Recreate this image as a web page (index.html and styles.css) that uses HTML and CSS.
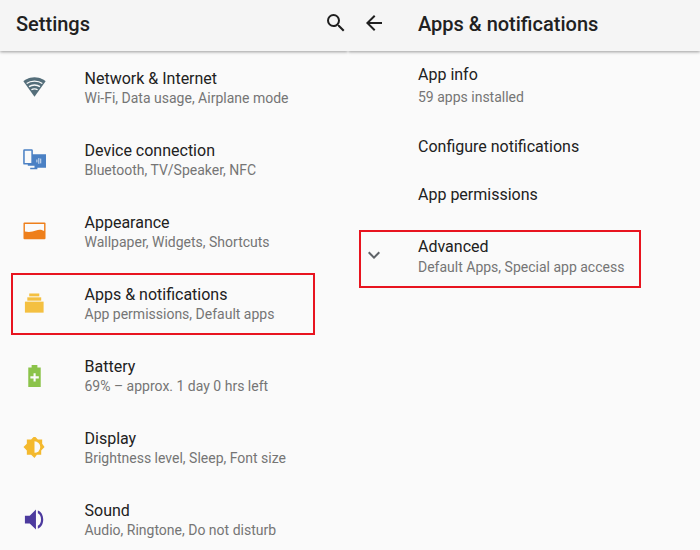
FILE: index.html
```html
<!DOCTYPE html>
<html lang="en">
<head>
<meta charset="utf-8">
<title>Settings</title>
<link rel="stylesheet" href="styles.css">
</head>
<body>
<div class="screen">
  <section class="pane pane-left">
    <header class="bar">
      <h1 class="bar-title">Settings</h1>
      <svg class="bar-icon search" viewBox="0 0 24 24"><path d="M15.5 14h-.79l-.28-.27A6.47 6.47 0 0 0 16 9.5 6.5 6.5 0 1 0 9.5 16c1.61 0 3.09-.59 4.23-1.57l.27.28v.79l5 4.99L20.49 19l-4.99-5zm-6 0C7.01 14 5 11.99 5 9.5S7.01 5 9.5 5 14 7.01 14 9.5 11.99 14 9.5 14z"/></svg>
    </header>
    <ul class="list">
      <li class="row">
        <svg class="row-icon" viewBox="0 0 24 24"><g transform="translate(0 -2)"><path fill="#546e7a" d="M12 22.500 .4 6.400C1.500 5.500 5.600 2.300 12 2.300s10.500 3.200 11.600 4.100z"/><path fill="none" stroke="#fafafa" stroke-width="1.400" d="M3.800 8.800C5.800 7.300 8.600 6.300 12 6.300s6.200 1 8.200 2.500M6.300 12c1.600-1.100 3.500-1.700 5.700-1.700s4.100.6 5.700 1.700M8.800 15.300c.9-.6 2-.9 3.200-.9s2.300.3 3.200.9"/></g></svg>
        <div class="text"><div class="title">Network &amp; Internet</div><div class="sub">Wi-Fi, Data usage, Airplane mode</div></div>
      </li>
      <li class="row">
        <svg class="row-icon" viewBox="0 0 24 24"><path fill="#4a80c4" d="M5 5.500h19v14h-9V21H7.500v-1.500H12v-2H5z"/><rect x="1" y="1" width="8.500" height="14.500" rx=".5" fill="#fafafa" stroke="#4a80c4" stroke-width="1.600"/><path fill="none" stroke="#dbe6f4" stroke-width="1" d="M14.500 11v3M16.500 9.500v6M18.500 10v5"/></svg>
        <div class="text"><div class="title">Device connection</div><div class="sub">Bluetooth, TV/Speaker, NFC</div></div>
      </li>
      <li class="row">
        <svg class="row-icon" viewBox="0 0 24 24"><rect x=".5" y="1.500" width="23" height="17.500" rx="1" fill="#ee7f1b"/><path fill="#fafafa" d="M2 3h20v7.500c-3-1.800-5.500-1.800-8.500-.6-3.500 1.400-7.500 2-11.500 1z"/></svg>
        <div class="text"><div class="title">Appearance</div><div class="sub">Wallpaper, Widgets, Shortcuts</div></div>
      </li>
      <li class="row is-marked">
        <svg class="row-icon" viewBox="0 0 24 24"><path fill="#f4c041" d="M2 9h19.500v11.500H2z"/><path fill="#f4c041" d="M4.500 4.500h14.500v3.500H4.500z"/><path fill="#f4c041" d="M6.500 .5h10.500v3H6.500z"/></svg>
        <div class="text"><div class="title">Apps &amp; notifications</div><div class="sub">App permissions, Default apps</div></div>
      </li>
      <li class="row">
        <svg class="row-icon" viewBox="0 0 24 24"><path fill="#8bc34a" d="M9 0h6v2.500h3.500V23h-13V2.500H9z"/><path fill="#fafafa" d="M11 8.500h2.200v3.300h3.300V14h-3.300v3.300H11V14H7.700v-2.200H11z"/></svg>
        <div class="text"><div class="title">Battery</div><div class="sub">69% – approx. 1 day 0 hrs left</div></div>
      </li>
      <li class="row">
        <svg class="row-icon" viewBox="0 0 24 24"><g transform="translate(0 -1.500)"><path fill="#f4b92e" d="M22.500 12 19 15.500V20h-4.500L12 23.500 8.500 20H4v-4.500L.5 12 4 8.500V4h4.500L12 .5 15.500 4H20v4.500z"/><path fill="#fafafa" d="M12 6a6 6 0 0 1 0 12z"/></g></svg>
        <div class="text"><div class="title">Display</div><div class="sub">Brightness level, Sleep, Font size</div></div>
      </li>
      <li class="row">
        <svg class="row-icon" viewBox="0 0 24 24"><g transform="translate(0 -1)"><path fill="#4c3a9e" d="M2 8v8h5l6.500 6.500V1.500L7 8z"/><path fill="#4c3a9e" d="M15.500 2.500v3c2.300.9 3.300 3.600 3.300 6.500s-1 5.600-3.300 6.500v3c3.600-1.200 5.600-5 5.600-9.500s-2-8.300-5.600-9.500z"/></g></svg>
        <div class="text"><div class="title">Sound</div><div class="sub">Audio, Ringtone, Do not disturb</div></div>
      </li>
    </ul>
  </section>
  <section class="pane pane-right">
    <header class="bar">
      <svg class="bar-icon back" viewBox="0 0 24 24"><path d="M20 11H7.830l5.590-5.590L12 4l-8 8 8 8 1.410-1.410L7.830 13H20v-2z"/></svg>
      <h1 class="bar-title">Apps &amp; notifications</h1>
    </header>
    <ul class="detail">
      <li class="item item-info"><div class="title">App info</div><div class="sub sub-wide">59 apps installed</div></li>
      <li class="item item-single"><div class="title">Configure notifications</div></li>
      <li class="item item-single"><div class="title">App permissions</div></li>
      <li class="item item-advanced is-marked">
        <svg class="chevron" viewBox="0 0 24 24"><path d="M16.590 8.590 12 13.170 7.410 8.590 6 10l6 6 6-6z"/></svg>
        <div class="title">Advanced</div><div class="sub">Default Apps, Special app access</div>
      </li>
    </ul>
  </section>
</div>
</body>
</html>
```

FILE: styles.css
```css
* { box-sizing: border-box; }
html, body { margin: 0; padding: 0; }
body {
  width: 700px;
  height: 550px;
  overflow: hidden;
  background: #fafafa;
  font-family: Roboto, "Liberation Sans", sans-serif;
}
.screen {
  display: grid;
  grid-template-columns: 348px 352px;
  height: 550px;
}
.pane { min-width: 0; }
.bar {
  display: flex;
  align-items: center;
  height: 51px;
  background: #f5f5f5;
  box-shadow: 0 1px 3px rgba(0, 0, 0, .38);
  clip-path: inset(0 0 -6px 0);
  position: relative;
}
.pane-left .bar { padding: 0 0 3px 16px; justify-content: space-between; }
.pane-right .bar { padding: 0 0 3px 14px; }
.bar-title {
  margin: 0;
  font-size: 20px;
  font-weight: 500;
  line-height: 28px;
  color: #212121;
}
.bar-icon { width: 24px; height: 24px; fill: #1f1f1f; flex: none; margin-top: -2px; }
.back { margin-right: 32px; }
.list, .detail { list-style: none; margin: 0; padding: 0; }
.list { padding-top: 2px; }
.row {
  position: relative;
  display: flex;
  align-items: center;
  height: 72px;
  padding-left: 23px;
}
.row-icon { width: 23px; height: 23px; flex: none; margin-right: 38.500px; margin-top: -2px; }
.text { margin-bottom: 1px; }
.title { font-size: 16px; line-height: 20px; color: #212121; }
.sub { font-size: 14px; line-height: 20px; color: #757575; }
.text .sub { margin-top: -1px; }
.sub-wide { margin-top: 2px; }
.item { position: relative; padding-left: 70px; }
.item-info { padding-top: 14px; height: 71px; }
.item-single { height: 48px; padding-top: 15px; }
.item-advanced { height: 72px; padding-top: 19px; }
.chevron {
  position: absolute;
  left: 14px;
  top: 25px;
  width: 24px;
  height: 24px;
  fill: #5f6368;
}
.is-marked::after {
  content: "";
  position: absolute;
  box-sizing: border-box;
  border: 2px solid #e8141f;
  pointer-events: none;
}
.row.is-marked::after { left: 11px; top: 4px; width: 304px; height: 62px; }
.item-advanced.is-marked::after { left: 11px; top: 12px; width: 282px; height: 58px; }
```
